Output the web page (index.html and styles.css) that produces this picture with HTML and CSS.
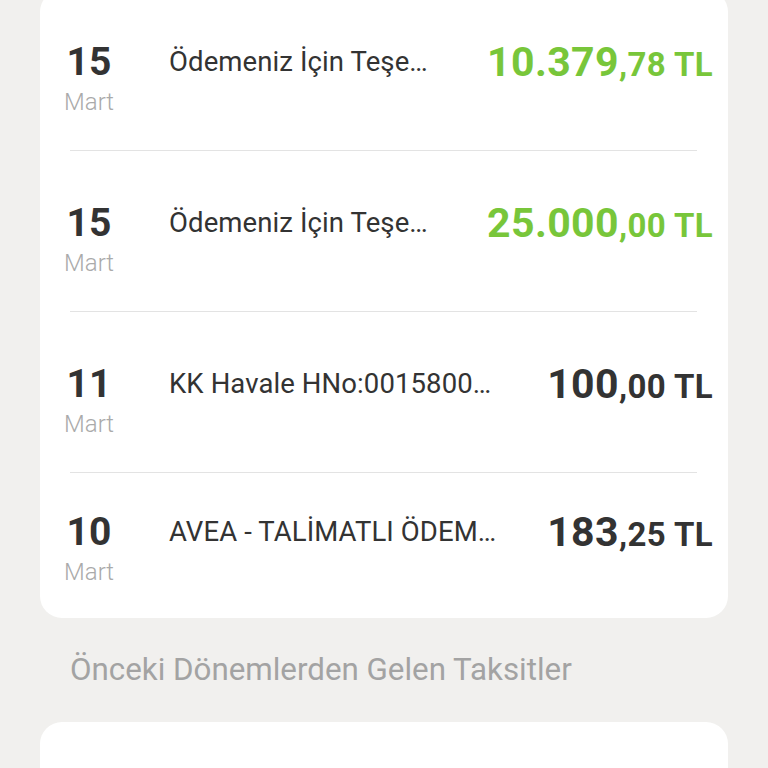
FILE: index.html
```html
<!DOCTYPE html>
<html lang="tr">
<head>
    <meta charset="UTF-8">
    <meta name="viewport" content="width=device-width, initial-scale=1.0">
    <title>Hesap Hareketleri</title>
    <link rel="stylesheet" href="styles.css">
</head>
<body>
    <div class="card">
        <div class="row">
            <div class="date">
                <div class="day">15</div>
                <div class="month">Mart</div>
            </div>
            <div class="desc">Ödemeniz İçin Teşe…</div>
            <div class="amount paid">10.379<span class="small">,78 TL</span></div>
        </div>
        <hr class="divider">
        <div class="row">
            <div class="date">
                <div class="day">15</div>
                <div class="month">Mart</div>
            </div>
            <div class="desc">Ödemeniz İçin Teşe…</div>
            <div class="amount paid">25.000<span class="small">,00 TL</span></div>
        </div>
        <hr class="divider">
        <div class="row">
            <div class="date">
                <div class="day">11</div>
                <div class="month">Mart</div>
            </div>
            <div class="desc">KK Havale HNo:0015800…</div>
            <div class="amount">100<span class="small">,00 TL</span></div>
        </div>
        <hr class="divider">
        <div class="row last">
            <div class="date">
                <div class="day">10</div>
                <div class="month">Mart</div>
            </div>
            <div class="desc">AVEA - TALİMATLI ÖDEM…</div>
            <div class="amount">183<span class="small">,25 TL</span></div>
        </div>
    </div>

    <h2 class="section-title">Önceki Dönemlerden Gelen Taksitler</h2>

    <div class="card next"></div>
</body>
</html>
```

FILE: styles.css
```css
body {
    margin: 0;
    padding: 0;
    background-color: #f1f0ee;
    font-family: Roboto, 'Noto Sans', Arial, sans-serif;
    color: #333;
    overflow: hidden;
}

.card {
    background: #fff;
    margin: -10px 40px 0 40px;
    border-radius: 22px;
}

.card.next {
    margin-top: 0;
    height: 120px;
}

.row {
    display: flex;
    align-items: flex-start;
    height: 160px;
    box-sizing: border-box;
    padding: 50px 15px 0 24px;
}

.row.last {
    height: 145px;
    padding-top: 37px;
}

.date {
    width: 50px;
    flex-shrink: 0;
    text-align: center;
}

.day {
    font-size: 39px;
    font-weight: 700;
    line-height: 44px;
    color: #333;
}

.month {
    margin-top: 4px;
    font-size: 24px;
    line-height: 28px;
    font-weight: 300;
    color: #aaa;
}

.desc {
    flex: 1;
    min-width: 0;
    margin-left: 55px;
    font-size: 27.5px;
    line-height: 44px;
    letter-spacing: 0.1px;
    white-space: nowrap;
    color: #333;
}

.amount {
    margin-left: 40px;
    font-size: 41px;
    font-weight: 700;
    line-height: 44px;
    white-space: nowrap;
    letter-spacing: 0.4px;
    color: #333;
}

.amount.paid {
    color: #78c63a;
}

.amount .small {
    font-size: 33px;
}

.divider {
    margin: 0 31px 0 30px;
    border: none;
    height: 1px;
    background: #e3e3e3;
}

.section-title {
    margin: 0;
    padding: 32px 0 32px 70px;
    font-size: 31.3px;
    font-weight: 400;
    line-height: 40px;
    color: #a3a3a3;
}
```
